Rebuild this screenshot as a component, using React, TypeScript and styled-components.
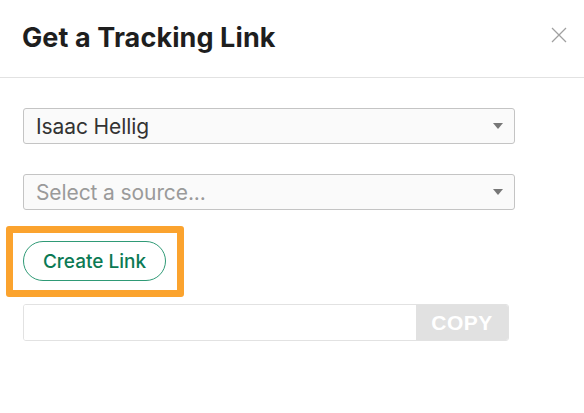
import React from "react";
import styled, { createGlobalStyle } from "styled-components";

const Global = createGlobalStyle`
  html, body { margin: 0; padding: 0; background: #fff; }
  body { font-family: Inter, "Noto Sans", sans-serif; }
  * { box-sizing: border-box; }
`;

const Modal = styled.div`
  width: 584px;
  height: 413px;
  background: #fff;
  display: flex;
  flex-direction: column;
`;

const Header = styled.header`
  height: 78px;
  border-bottom: 1px solid #e2e2e2;
  display: flex;
  align-items: flex-start;
  justify-content: space-between;
  padding: 23px 16px 0 22px;
`;

const Title = styled.h1`
  margin: 0;
  font-family: Inter, sans-serif;
  font-size: 27px;
  font-weight: 700;
  letter-spacing: 0.1px;
  color: #1e1e1e;
  line-height: 30px;
`;

const CloseButton = styled.button`
  border: none;
  background: none;
  padding: 0;
  margin-top: 3px;
  width: 18px;
  height: 18px;
  display: flex;
  align-items: center;
  justify-content: center;
  cursor: pointer;
`;

const Body = styled.div`
  padding: 30px 69px 0 23px;
  display: flex;
  flex-direction: column;
`;

const SelectBox = styled.div<{ $placeholder?: boolean }>`
  height: 36px;
  width: 492px;
  border: 1px solid #c4c4c4;
  border-radius: 3px;
  background: #fafafa;
  display: flex;
  align-items: center;
  justify-content: space-between;
  padding: 0 11px 0 12px;
  font-family: Inter, sans-serif;
  font-size: 21px;
  letter-spacing: -0.1px;
  color: ${(p) => (p.$placeholder ? "#9a9a9a" : "#333")};
  & + & {
    margin-top: 30px;
  }
`;

const Caret = styled.span`
  width: 0;
  height: 0;
  border-left: 5px solid transparent;
  border-right: 5px solid transparent;
  border-top: 6px solid #777;
`;

const Highlight = styled.div`
  align-self: flex-start;
  margin: 16px 0 0 -17px;
  border: 7px solid #fba32e;
  border-radius: 3px;
  padding: 8px 11px 9px 10px;
`;

const CreateButton = styled.button`
  height: 40px;
  width: 143px;
  border: 1px solid #2f9a76;
  border-radius: 20px;
  background: #fff;
  color: #0b7a54;
  font-family: Inter, sans-serif;
  font-size: 19px;
  font-weight: 500;
  letter-spacing: 0px;
  padding: 0;
  cursor: pointer;
`;

const CopyRow = styled.div`
  margin-top: 7px;
  width: 486px;
  height: 37px;
  display: flex;
  border: 1px solid #e2e2e2;
  border-radius: 3px;
  overflow: hidden;
`;

const LinkInput = styled.input`
  flex: 1;
  border: none;
  outline: none;
  background: #fff;
  font-family: Inter, sans-serif;
  font-size: 16px;
  padding: 0 10px;
`;

const CopyButton = styled.button`
  width: 92px;
  border: none;
  background: #e1e1e1;
  color: #fff;
  font-family: "Liberation Sans", Arial, sans-serif;
  font-size: 21px;
  font-weight: 700;
  letter-spacing: 0.5px;
  padding: 0;
`;

export default function App() {
  return (
    <>
      <Global />
      <Modal>
        <Header>
          <Title>Get a Tracking Link</Title>
          <CloseButton aria-label="Close">
            <svg width="16" height="16" viewBox="0 0 16 16">
              <path d="M1 1L15 15M15 1L1 15" stroke="#a0a0a0" strokeWidth="1.3" fill="none" />
            </svg>
          </CloseButton>
        </Header>
        <Body>
          <SelectBox>
            <span>Isaac Hellig</span>
            <Caret />
          </SelectBox>
          <SelectBox $placeholder>
            <span>Select a source...</span>
            <Caret />
          </SelectBox>
          <Highlight>
            <CreateButton>Create Link</CreateButton>
          </Highlight>
          <CopyRow>
            <LinkInput readOnly value="" />
            <CopyButton disabled>COPY</CopyButton>
          </CopyRow>
        </Body>
      </Modal>
    </>
  );
}
